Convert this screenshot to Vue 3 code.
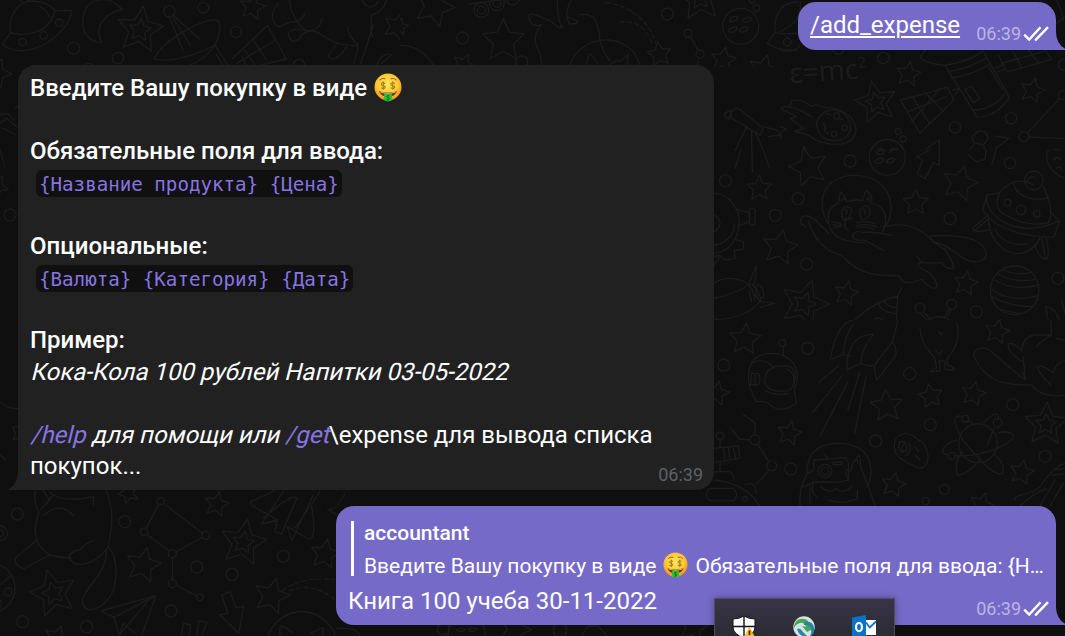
<script setup>
// Wallpaper doodles are grouped by area; every area is drawn at triple scale.
const areas = [
  {
    x: 0, y: 0,
    stars: [[420, 90, 72, 8, 1], [757, 22, 39, 12], [1190, 80, 42, 20], [-10, 220, 46, 20], [-10, 560, 36, 30]],
    rings: [[178, 68, 11], [131, 106, 11], [68, 126, 11], [221, 145, 18], [354, 174, 17], [610, 23, 16], [708, 96, 17], [508, 34, 17], [897, 195, 17], [265, 207, 17], [30, 645, 18]],
    lines: [
      'M32 98C22 62 45 5 95 3Q145 5 165 32Q160 62 128 88Q72 112 32 98M165 32L213 31Q217 55 188 88Q140 145 65 153Q25 150 7 133L32 98M60 0L70 8M88 0L76 7M118 18Q140 30 148 50',
      'M366 28C335 -12 264 -16 250 48C240 95 270 130 305 127C285 90 300 45 366 28',
      'M463 178Q475 140 550 95Q620 55 650 60Q672 75 645 135Q615 180 560 200M463 178Q540 190 645 135L685 198M508 50L549 152M515 48L572 137M518 45L600 118M650 165L670 200',
      'M698 175L803 76L859 177L765 200M710 190L828 120M735 150L765 195M760 120L800 180M725 168L740 198',
      'M835 10C800 45 825 95 850 75C870 60 900 75 915 40M868 0Q875 60 918 92C950 95 965 75 965 55M918 92Q880 80 865 100C868 130 895 130 905 105Q925 85 955 98Q1020 145 1075 135Q1045 110 1043 82M1010 132Q995 155 985 165C990 185 1015 180 1040 140M1075 135Q1070 165 1060 190M1115 45Q1110 90 1118 110M1120 75Q1100 140 1080 195M1085 0Q1110 40 1135 5M1115 45Q1150 35 1160 0M1130 195Q1145 155 1175 165L1145 190',
      'M0 345L25 340L40 360M0 370L20 355L50 380M10 385L48 405M45 325L54 318M0 450L15 505M0 1205Q25 1230 54 1225M54 1280L38 1282L46 1300L40 1320L54 1315M0 1365L18 1380'
    ]
  },
  {
    x: 400, y: 0,
    stars: [[103, 20, 62, 20], [310, 122, 66, 0], [900, -5, 70, -5, 1], [778, 163, 38, -8], [970, 180, 39, 10], [1090, 210, 47, 15], [0, 80, 26, 10], [190, 195, 35, 25]],
    rings: [[188, 114, 18], [365, 186, 18], [802, 42, 18], [864, 100, 12], [900, 162, 12], [1069, 24, 10], [1057, 0, 9], [244, 30, 22], [244, 30, 12], [291, 10, 22], [291, 10, 12], [338, -5, 20], [1022, 79, 54], [1162, 126, 12]],
    lines: [
      'M0 136Q65 135 103 200M205 12L300 0M871 110L894 150M895 175L891 200',
      'M425 200Q425 165 412 145Q395 105 425 73C400 85 385 65 387 45C400 35 430 55 455 65Q475 85 487 83M472 0Q470 55 487 83M515 0Q490 40 508 72Q560 70 500 50M543 44C588 36 595 75 600 120Q605 150 630 183M510 195C540 100 690 90 720 195M560 195Q565 150 575 165L592 190M630 195Q645 180 660 183L687 163L680 195',
      'M988 65Q990 45 1010 50Q1020 65 988 65M1027 60Q1040 48 1055 55Q1050 72 1027 65M985 92Q998 75 1012 83Q1005 102 985 95M1018 92Q1030 75 1045 83Q1040 100 1018 95M1125 98C1120 35 1150 5 1200 5M1125 98L1102 130Q1135 155 1200 150M1125 98Q1160 105 1200 98'
    ],
    dashes: ['M618 8C690 15 750 65 768 132', 'M660 66C715 60 740 90 756 130']
  },
  {
    x: 780, y: 0,
    stars: [[385, 222, 38, 10], [288, 307, 65, -12, 1], [757, 272, 38, 15], [90, 490, 55, -20], [-10, 390, 28, 10]],
    rings: [[310, 174, 17], [525, 382, 17], [693, 355, 17], [852, 194, 17], [850, 285, 14], [732, 410, 15], [210, 483, 17], [355, 394, 9], [369, 417, 9], [175, 146, 17], [22, 126, 11], [322, 472, 53], [690, 490, 17], [170, 348, 9], [194, 383, 8], [162, 402, 8]],
    lines: [
      'M420 170L440 145M420 170Q430 190 495 196L592 352Q650 350 688 292L610 155M495 196Q565 185 608 155M503 215Q570 205 618 174M512 234Q580 225 628 192M555 268L574 258L600 295L580 308L555 268M578 330Q640 330 674 280M625 200L668 270M518 270L538 265L525 285M645 205L668 195M655 215L673 208',
      'M361 300L502 262L522 300L420 400L361 300M382 335L500 290M397 290L448 370M440 282L490 335M395 365L480 265M655 165L682 216L815 178L795 150M665 190L790 155M700 155L725 203M745 150L775 187',
      'M742 400L840 294M747 411L855 416M0 325C20 310 65 330 95 350M30 318L35 302C65 295 80 310 95 318M95 318L108 314Q120 318 140 323C185 325 228 350 228 392C225 425 190 437 150 432Q105 425 85 405L45 395L70 385L30 355L50 350L0 325M125 345C95 370 115 415 150 420C195 430 220 395 208 365C190 325 145 320 125 345M130 370L138 385M138 345Q145 335 152 345M180 360Q185 350 190 360M145 400Q130 395 135 385',
      'M413 467L478 418L478 495L413 467M650 408L687 415L648 445L640 480M595 392L615 395L625 415L610 434L584 430L575 412ZM584 430L565 455L572 480M610 434L617 465L607 480M800 475C795 455 820 440 850 455M287 456Q297 440 315 450Q310 467 287 460M327 453Q340 440 355 448Q345 465 327 458M60 5C65 40 55 70 0 95M0 152Q45 160 60 135M830 0Q845 30 850 60M826 75L853 50'
    ],
    equation: true
  },
  {
    x: 700, y: 150,
    stars: [[325, 52, 60, -15], [178, 115, 39, 0], [647, 158, 40, 0], [780, 100, 55, 15], [240, 292, 55, 10], [313, 462, 75, 18, 1], [439, 430, 38, 12], [797, 400, 38, 10], [887, 545, 40, 25]],
    rings: [[450, 33, 18], [76, 92, 18], [294, 146, 18], [226, 196, 18], [750, 206, 18], [930, 39, 17], [320, 343, 18], [829, 485, 18], [1074, 385, 18], [562, 22, 54], [534, 521, 17], [660, 475, 15], [755, 463, 15], [923, 158, 10], [963, 180, 14], [1010, 191, 10], [1001, 91, 28], [944, 421, 73], [35, 220, 25], [715, 548, 30]],
    lines: [
      'M383 220C348 160 365 77 465 76C560 77 595 160 560 225M415 160L422 125Q435 135 440 155Q465 147 487 152L498 121Q520 135 515 160C550 165 570 200 548 245M415 160C370 175 380 235 410 258Q430 275 495 278M425 152Q430 140 435 150M500 150Q508 135 510 155M430 210C415 180 440 155 455 180Q450 210 430 210M485 208C468 180 495 150 510 178Q510 210 485 208M435 178Q445 185 438 193M490 178Q500 185 493 193M395 215L425 222M397 225L425 226M400 233L422 230M435 205Q450 210 458 203M440 208Q425 225 445 243M472 218Q505 210 525 222M470 226Q510 220 530 232M472 232Q505 228 520 238',
      'M316 229C295 220 298 195 325 198Q345 205 365 230Q380 240 385 250M325 215Q355 300 425 315M425 315C465 365 515 380 595 376C615 415 650 390 665 388Q685 410 700 415C720 415 710 390 685 366Q650 355 655 338Q690 340 725 338Q740 360 760 355C765 345 750 325 735 298Q715 290 690 265M550 230Q635 210 690 265M690 258Q820 250 850 290C880 335 825 345 790 325Q735 280 695 275M650 318L665 338M550 301L493 270Q458 275 458 255Q465 240 490 247Q535 245 573 257',
      'M122 0L106 54M156 0L157 65M190 0L208 52M42 130C90 130 120 180 117 220C115 265 90 305 42 310M42 285C85 280 105 245 102 222M108 178L148 188V214L115 228M148 180Q158 170 166 180L165 222Q155 230 148 222ZM106 268L130 275V298L103 300M103 300L105 325L75 330L58 315L42 320M42 345L60 320',
      'M42 400C75 375 130 385 145 405Q160 430 180 455Q130 510 42 508M42 445Q110 430 145 405L168 348Q170 385 160 405M145 405Q175 400 182 455L225 460L180 472M170 405Q190 400 192 442L180 445M148 425L155 455M157 418L165 453M165 413L175 450',
      'M440 540Q500 460 593 438M440 540Q450 525 470 520M593 438L605 413M593 438L588 540M535 460Q545 490 590 490M552 452Q565 475 592 472M661 490L682 510M670 487L690 505M748 475L735 502M755 477L742 502M660 540Q670 510 710 500Q760 500 773 540',
      'M861 135L900 128C930 85 975 88 1001 105M900 128Q880 165 905 188Q980 235 1045 218Q1065 180 1030 110M940 95C945 145 1010 155 1045 142M861 135C855 170 880 205 930 225Q1000 250 1078 212L1050 185M861 135L848 180C885 235 960 260 1062 262L1078 212M865 200C865 265 905 310 955 311Q995 308 1020 265M885 238Q910 290 982 282M865 195L817 235Q825 250 865 240M868 205L820 245M1018 265L1005 292Q1020 325 1038 328Q1050 325 1040 265M1025 265L1037 325M978 98Q985 80 1002 80',
      'M910 360Q950 380 995 366M895 372Q940 400 1010 388M885 390Q940 425 1017 405M873 418Q935 460 1015 437M875 440Q930 470 998 470M900 478Q940 490 970 490M650 20L690 0M650 20L668 30L652 72L675 86L700 38L718 46V0M805 15L830 35L855 28L858 0M888 0L875 46M1095 85C1050 70 1030 25 1045 0M1060 30Q1075 15 1080 30M1070 55Q1080 45 1085 60M528 8Q540 -5 555 5Q545 20 528 8M568 8Q575 -5 590 0M524 35Q535 20 552 27Q545 45 524 38M558 35Q570 20 585 27Q580 42 558 38M1040 470Q1080 480 1082 540M1037 470L1050 540M1095 490L1085 450',
      'M73 -110L90 -118L96 -100L78 -94ZM88 -92Q95 -130 115 -125L190 -65L180 -45L95 -95M140 -70L106 0M155 -60V0M165 -55L190 0M190 -70L230 -60L240 -45L205 -40'
    ]
  },
  {
    x: 700, y: 320,
    stars: [[135, 58, 49, 5], [50, 220, 38, 12], [268, 340, 38, 12], [560, 258, 50, -5], [692, 228, 38, -10], [820, 222, 38, 12], [891, 35, 38, 12], [1038, 313, 67, 3, 1], [965, 457, 38, 12], [580, 495, 38, 12], [844, 555, 38, 20]],
    rings: [[247, 69, 10], [323, 85, 18], [71, 135, 18], [629, 161, 18], [691, 314, 18], [527, 363, 18], [938, 254, 18], [1035, 409, 18], [733, 508, 15], [272, 447, 18], [60, 347, 11], [165, 360, 15], [215, 437, 15], [375, 453, 20], [375, 453, 11], [796, 296, 10], [893, 309, 13], [755, 408, 11], [834, 370, 58], [135, 537, 7], [677, 543, 11]],
    lines: [
      'M390 120C400 65 420 5 460 0M390 120L430 103L455 110M440 150C440 95 460 40 520 43Q485 85 482 130L440 150M482 130Q510 140 522 138L577 65Q590 25 592 0M522 138L530 181L588 105Q590 80 577 65M430 103Q430 55 460 12M415 137L355 188M427 167L340 276M444 185L360 348M480 156L443 272M498 170L464 340',
      'M170 245C130 180 135 100 215 100C275 100 300 145 290 190C275 210 290 225 288 250Q245 280 218 260Q195 240 170 245M160 128C180 115 210 125 220 145M195 190C190 140 230 135 265 138C300 150 285 205 265 212Q205 220 195 190M195 212Q235 230 265 220M153 160H175Q185 180 175 194H153ZM250 80V108M260 147Q290 160 280 193M165 165V192',
      'M660 25C665 75 685 90 705 115L710 145Q690 150 690 155L720 153L718 123H735V148L762 150Q765 140 742 136V115C770 85 780 45 770 5M708 90Q718 115 727 90M715 35Q725 50 727 38',
      'M975 178C960 170 925 140 880 100C850 70 810 90 825 115C860 190 920 195 995 195C1020 230 1060 230 1095 225M975 178Q975 145 968 110M975 178L968 155M968 125Q920 95 925 72Q940 65 965 92Q970 45 1010 45L1055 45L1052 0M1010 80Q1025 60 1055 45M1095 122Q1070 125 1060 158Q1020 130 1012 142Q1020 165 1052 195M1070 55L1095 60',
      'M300 558Q295 510 320 463C320 400 355 370 415 370C475 370 520 400 512 470Q505 495 500 500M320 463L342 450V420L435 413Q450 415 445 480L420 486H340L310 500M340 486Q330 520 350 530M375 405L382 413M400 426H425V434H400ZM362 500Q390 525 408 505Q430 525 455 500M385 540Q430 555 472 535V510M445 475Q435 465 440 448Q445 455 455 450L455 435L475 405Q485 420 480 440M480 435Q510 510 525 558M310 500L340 488M330 500V550M465 425Q475 410 473 430',
      'M130 283L165 310V345M90 322L118 357L150 360M173 373L207 425M209 449L170 492M60 360V380M60 430V452M42 385L115 378L120 415L45 427M70 383L75 425M85 382L90 420M100 380L107 418M42 455H85Q100 455 102 480M42 480Q140 490 178 558M135 495Q165 480 170 520M28 505H100Q120 525 100 542H30Q10 525 28 505',
      'M605 343C570 355 580 410 610 420Q640 440 660 445C700 435 685 370 655 360Q630 335 605 343M600 365C590 390 605 405 620 390Q620 360 600 365M625 370Q640 385 620 405M645 380L655 395M645 405L660 420M612 370Q600 390 612 395',
      'M782 288C750 285 765 330 800 375C850 430 880 465 905 462C915 450 910 425 885 405M840 415C820 450 780 470 770 465C765 440 770 410 790 395M770 360C725 375 715 400 745 405M768 408C850 410 945 370 940 345Q925 330 895 338M850 308Q880 280 890 282Q900 290 893 298M882 325L860 380M805 302L820 312',
      'M945 540C940 520 990 530 1020 500Q1060 440 1095 430M960 558Q1000 520 1040 505M1060 450L1095 445M1055 465L1095 462M1065 480L1020 558M1090 490L1050 558'
    ]
  },
  {
    x: 0, y: 470,
    stars: [[650, 103, 38, 12], [430, 285, 54, 12], [730, 218, 72, 10, 1], [160, 370, 73, -15, 1], [975, 253, 46, 10], [815, 378, 55, 15], [170, 505, 40, 20], [385, 70, 32, 50]],
    rings: [[52, 132, 18], [374, 155, 18], [590, 291, 18], [696, 313, 18], [850, 259, 18], [513, 423, 18], [68, 455, 18], [260, 470, 18], [0, 190, 22], [0, 190, 10], [482, 93, 11], [432, 185, 11], [617, 196, 12], [517, 251, 12], [517, 341, 12], [600, 382, 10], [24, 366, 12], [-30, 354, 75]],
    lines: [
      'M105 62Q100 100 118 125C95 180 105 230 150 255M318 62C345 120 335 180 325 230Q285 285 235 283Q205 275 210 255Q220 240 240 240Q260 215 283 212M150 255Q180 265 215 263M150 255Q90 285 72 297Q45 285 45 270C45 255 65 255 75 240L108 212M118 125L160 75M130 137Q180 90 220 137M150 68Q190 100 280 80V105M130 62L148 90M325 230C360 270 350 350 330 380C290 435 245 425 248 390C250 355 325 310 318 240',
      'M476 103L438 176M440 193L507 243M491 100L607 190M607 202L527 246M517 263V329M528 346L590 378M303 423L467 377L425 498M303 423L342 442L467 377M342 442L358 495L445 392M358 495L370 460L405 490M665 375L690 365L708 413L731 410L716 490L660 435L683 430L665 375',
      'M825 62L752 95Q750 110 800 130L832 150L785 162L850 65M832 150L825 185L845 192L890 85Q880 65 790 145M862 170L875 212L940 75M862 170L925 207C945 210 945 170 935 110M885 175L960 65M983 118Q1010 125 1035 70M983 118Q1010 140 1035 135M545 498L550 460L572 465L568 498M590 498L597 452L620 458L605 498M803 498C845 400 965 400 1008 498M840 498Q835 460 850 470L878 488M930 490L968 473V498M0 345L35 315M0 390Q10 400 0 415'
    ],
    dashes: ['M848 362Q900 320 1003 328', 'M868 362Q940 335 1003 388']
  },
  {
    x: 330, y: 590,
    stars: [[555, 118, 50, 20], [1090, 110, 48, 10]],
    rings: [[340, 117, 18], [410, 130, 55], [690, 120, 20]],
    lines: ['M380 120Q395 108 405 118Q398 130 380 120M415 120Q430 108 440 118Q430 130 415 120M755 138L775 108H805L830 138M20 115Q80 110 90 138']
  }
]

// Closed five-pointed star outline.
function star(cx, cy, r, turn) {
  return Array.from({ length: 10 }, (_, i) => {
    const a = ((turn - 90 + i * 36) * Math.PI) / 180
    const d = i % 2 ? r * 0.48 : r
    return `${(cx + d * Math.cos(a)).toFixed(1)},${(cy + d * Math.sin(a)).toFixed(1)}`
  }).join(' ')
}
</script>

<template>
  <main class="chat">
    <svg class="wallpaper" width="1065" height="636" viewBox="0 0 1065 636" aria-hidden="true">
      <defs>
        <clipPath v-for="(a, i) in areas" :id="'area' + i" :key="i">
          <rect v-if="i === 0" x="0" y="0" width="1200" height="1410" />
          <rect v-else-if="i === 1" x="0" y="0" width="1194" height="200" />
          <rect v-else-if="i === 2" x="0" y="0" width="855" height="450" />
          <rect v-else-if="i === 3" x="0" y="-150" width="1095" height="660" />
          <rect v-else x="0" y="0" width="1200" height="560" />
        </clipPath>
      </defs>
      <g v-for="(a, i) in areas" :key="i" :transform="`translate(${a.x} ${a.y}) scale(.33333)`">
        <g :clip-path="`url(#area${i})`">
          <template v-for="(s, j) in a.stars" :key="'s' + j">
            <polygon :points="star(s[0], s[1], s[2], s[3])" />
            <polygon v-if="s[4]" :points="star(s[0], s[1], s[2] * 0.48, s[3])" />
          </template>
          <circle v-for="(c, j) in a.rings" :key="'c' + j" :cx="c[0]" :cy="c[1]" :r="c[2]" />
          <path v-for="(d, j) in a.lines" :key="'l' + j" :d="d" />
          <path v-for="(d, j) in a.dashes || []" :key="'d' + j" :d="d" stroke-dasharray="13 9" />
          <text v-if="a.equation" class="equation" x="30" y="250" textLength="232" transform="rotate(-4 30 250)">ε=mc<tspan dy="-32" font-size="44">2</tspan></text>
        </g>
      </g>
    </svg>

    <svg width="0" height="0" class="sprites" aria-hidden="true">
      <defs>
        <radialGradient id="face" cx=".48" cy=".4" r=".62">
          <stop offset="0" stop-color="#ffe65c" /><stop offset=".6" stop-color="#ffca35" /><stop offset="1" stop-color="#f08b18" />
        </radialGradient>
        <symbol id="money" viewBox="0 0 28 30">
          <circle cx="14" cy="14" r="13.5" fill="url(#face)" />
          <path d="M6 7Q8 4.8 11 5.8M17 5.8Q20 4.8 22 7" fill="none" stroke="#a45c12" stroke-width="1.1" stroke-linecap="round" />
          <path d="M5 18Q14 21 23 18Q21.5 23.5 14 23.8Q6.5 23.5 5 18Z" fill="#6b3510" />
          <path d="M6 18.3Q14 21.3 22 18.3L21.4 19.5Q14 22 6.6 19.5Z" fill="#e8c98a" />
          <path d="M10.2 20.6Q14 21.6 17.8 20.6L18.2 27Q14 29.8 9.8 27Z" fill="#2fc331" />
          <path d="M15.8 22.8Q12.2 21.7 12.4 23.8Q15.8 24.4 15.6 26Q15 27.5 12.2 26.7M14 21.9V28" fill="none" stroke="#147a20" stroke-width=".9" />
          <path d="M11.3 10.4Q7.5 8.8 7.3 11Q7.2 12.2 9.3 12.7Q11.5 13.2 11.1 14.6Q10 16.1 7 14.7M9.3 8.5V16.8M20.8 10.4Q17 8.8 16.8 11Q16.7 12.2 18.8 12.7Q21 13.2 20.6 14.6Q19.5 16.1 16.5 14.7M18.8 8.5V16.8" fill="none" stroke="#a17a20" stroke-width="1.1" />
        </symbol>
        <symbol id="ticks" viewBox="0 0 26 16">
          <path d="M1.2 8.6L6.2 13.6L17.5 1.2M12 13L12.9 13.6L25 1.2" fill="none" stroke="#fff" stroke-width="2.4" />
        </symbol>
        <symbol id="tail" viewBox="0 0 10 18">
          <path d="M0 0Q0 11.5 9.6 17.2Q9.5 18 8.5 18H0Z" />
        </symbol>
      </defs>
    </svg>

    <section class="message own command">
      <a class="cmd"><span>/add_expense</span></a>
      <div class="meta"><span>06:39</span><svg><use href="#ticks" /></svg></div>
      <svg class="tail"><use href="#tail" /></svg>
    </section>

    <section class="message incoming">
      <p class="b first"><span>Введите Вашу покупку в виде</span><svg class="emoji"><use href="#money" /></svg></p>
      <p></p>
      <p class="b"><span>Обязательные поля для ввода:</span></p>
      <p><code>{Название продукта} {Цена}</code></p>
      <p></p>
      <p class="b"><span>Опциональные:</span></p>
      <p><code>{Валюта} {Категория} {Дата}</code></p>
      <p></p>
      <p class="b"><span>Пример:</span></p>
      <p><i>Кока-Кола 100 рублей Напитки 03-05-2022</i></p>
      <p></p>
      <p><i><a>/help</a> для помощи или <a>/get</a></i><span>\expense для вывода списка</span></p>
      <p>покупок...</p>
      <div class="meta"><span>06:39</span></div>
      <svg class="tail"><use href="#tail" /></svg>
    </section>

    <section class="message own reply">
      <blockquote>
        <strong>accountant</strong>
        <div class="quote"><span>Введите Вашу покупку в виде</span><svg class="emoji"><use href="#money" /></svg><span>Обязательные поля для ввода: {Н…</span></div>
      </blockquote>
      <p>Книга 100 учеба 30-11-2022</p>
      <div class="meta"><span>06:39</span><svg><use href="#ticks" /></svg></div>
      <svg class="tail"><use href="#tail" /></svg>
    </section>

    <aside class="tray">
      <svg width="24" height="24" viewBox="0 0 24 24">
        <path d="M12 1Q7 4 1 4V12Q1 19 12 23Q23 19 23 12V4Q17 4 12 1Z" fill="#fff" stroke="#111" />
        <path d="M12 1V23M1 11.5H23" stroke="#111" stroke-width="1.4" />
        <path d="M17.5 12L24 24H11Z" fill="#ffbd18" /><path d="M17.5 15.5V20" stroke="#332500" stroke-width="1.7" />
      </svg>
      <svg width="24" height="24" viewBox="0 0 24 24">
        <circle cx="12" cy="12" r="10.7" fill="#d8e2e3" />
        <path d="M2 11Q4 2 13 4Q18 6 18 12L21 14L15 17L10 11L14 12Q12 7 8 8Q4 9 2 13Z" fill="#43a850" />
        <path d="M12 7Q23 5 22 16Q21 20 18 22Q21 14 17 11Q15 9 12 10ZM5 14Q8 12 11 17L15 21Q8 23 5 14Z" fill="#2784a5" />
      </svg>
      <svg width="24" height="24" viewBox="0 0 24 24">
        <path d="M0 2.5L14 0V24H0Z" fill="#0872c4" />
        <ellipse cx="7" cy="12" rx="3" ry="4.2" fill="none" stroke="#fff" stroke-width="2.2" />
        <path d="M14 5H24V20H14Z" fill="#fff" /><path d="M14 7.5L17.8 12.5L24 6.5" fill="none" stroke="#0872c4" stroke-width="1.8" />
      </svg>
    </aside>
  </main>
</template>

<style>
body { background: #0f0f0f; overflow: hidden; }
</style>

<style scoped>
.chat {
  position: relative;
  box-sizing: border-box;
  display: flex;
  flex-direction: column;
  width: 1065px;
  height: 636px;
  padding: 2px 9px 0 18px;
  overflow: hidden;
  background: #0f0f0f;
  color: #fff;
  font: 24px/31.5px Roboto, sans-serif;
}
.wallpaper {
  position: absolute;
  inset: 0;
  fill: none;
  stroke: #1c1c1c;
  stroke-width: 4;
  stroke-linecap: round;
  stroke-linejoin: round;
}
.equation { fill: #1c1c1c; stroke: none; font: 84px "Noto Sans", sans-serif; }
.sprites { position: absolute; }
p { margin: 0; height: 31.5px; white-space: nowrap; }
.message { position: relative; box-sizing: border-box; flex: none; border-radius: 18px; }
.own { align-self: flex-end; background: #766ac8; border-bottom-right-radius: 0; }
.command { width: 258px; height: 47.5px; padding: 7.5px 12px; }
.incoming {
  width: 696px;
  height: 425px;
  margin-top: 15.5px;
  padding: 8px 12px;
  background: #212121;
  border-bottom-left-radius: 0;
}
.b { font-weight: 500; }
.first { display: flex; }
.emoji { width: 28px; height: 30px; }
.first .emoji { margin-left: 7px; }
i {
  display: inline-block;
  font-style: normal;
  transform: skewX(-14deg);
  transform-origin: 0 24px;
}
a { color: #8774e1; }
.cmd { color: #fff; text-decoration: underline; text-decoration-thickness: 2px; text-underline-offset: 3px; }
code {
  display: inline-block;
  height: 27px;
  margin: 2.5px 0 0 6px;
  padding: 0 3px;
  border-radius: 6px;
  background: #101010;
  color: #8774e1;
  font: 19.2px/29px "DejaVu Sans Mono", monospace;
  letter-spacing: -0.02px;
  vertical-align: top;
}
.meta {
  position: absolute;
  right: 7px;
  bottom: 3px;
  display: flex;
  align-items: center;
  height: 26px;
  color: #bcb5e4;
  font-size: 18px;
  line-height: 26px;
}
.meta svg { width: 26px; height: 16px; margin-left: 2px; }
.incoming .meta { right: 11px; bottom: 2px; color: #5d6064; }
.tail { position: absolute; left: 100%; bottom: 0; width: 10px; height: 18px; fill: #766ac8; }
.incoming .tail { left: -10px; fill: #212121; transform: scaleX(-1); }
.reply { width: 720px; height: 119px; margin-top: 16px; padding: 15px 12px 0; }
blockquote {
  box-sizing: border-box;
  height: 55px;
  margin: 0 0 10px 3px;
  padding-left: 10px;
  border-left: 3px solid #fff;
  font-size: 21px;
  line-height: 24px;
}
blockquote strong { display: block; font-weight: 500; height: 33px; }
.quote { display: flex; white-space: nowrap; }
.quote .emoji { width: 25px; height: 27px; flex: none; margin: -2px 7px 0; }
.tray {
  position: absolute;
  left: 714px;
  top: 598px;
  box-sizing: border-box;
  display: flex;
  gap: 36px;
  width: 181px;
  height: 60px;
  padding: 16px 0 0 17px;
  border: 1px solid #504d60;
  background: linear-gradient(#393447, #2b2b33 38px);
  box-shadow: 0 0 7px #0005;
}
</style>
